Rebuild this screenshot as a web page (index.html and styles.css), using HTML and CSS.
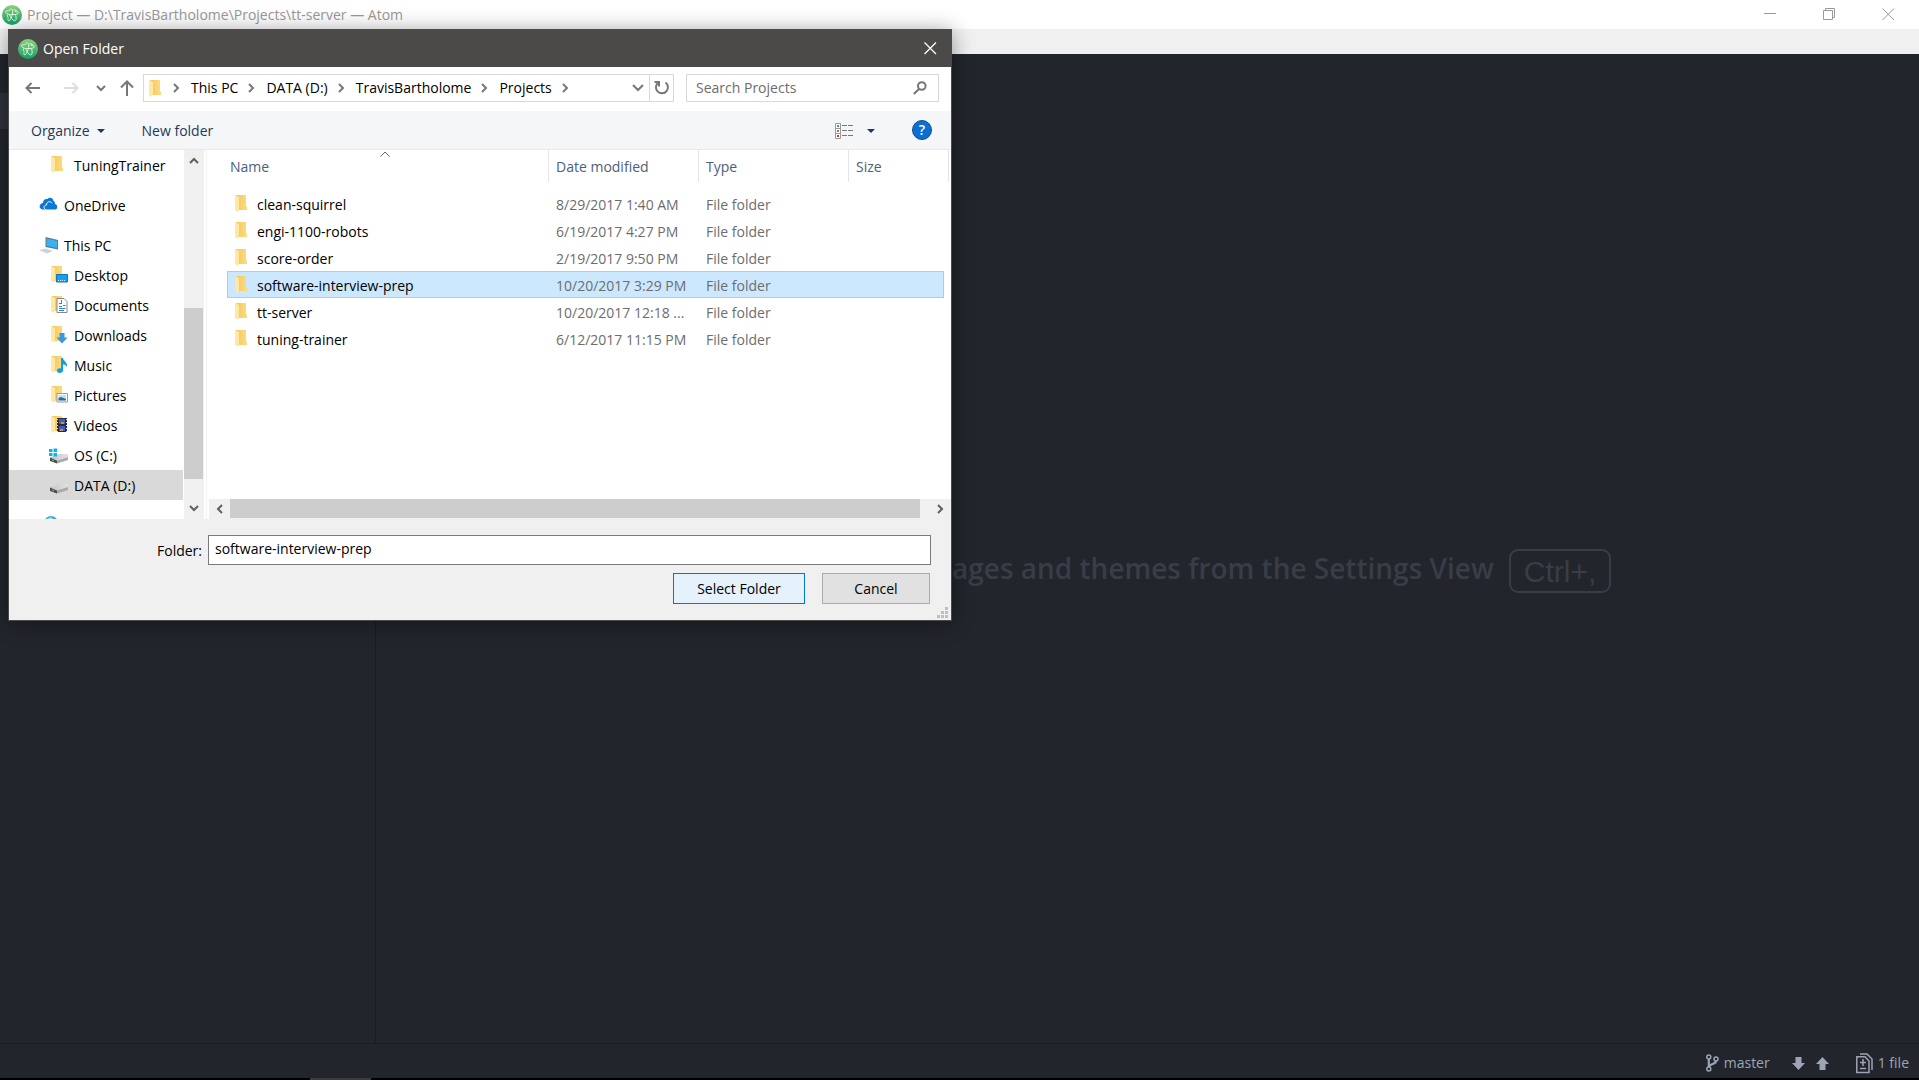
FILE: index.html
```html
<!DOCTYPE html>
<html lang="en">
<head>
<meta charset="utf-8">
<title>Project — Atom</title>
<link rel="stylesheet" href="styles.css">
</head>
<body>
<svg class="defs" aria-hidden="true">
  <defs>
    <linearGradient id="atom-green" x1="0" y1="0" x2="0" y2="1">
      <stop offset="0" stop-color="#8fd07c"/><stop offset="1" stop-color="#12a06c"/>
    </linearGradient>
    <linearGradient id="folder-gold" x1="0" y1="0" x2="1" y2="0">
      <stop offset="0" stop-color="#f0c75e"/><stop offset="1" stop-color="#fddc80"/>
    </linearGradient>
    <linearGradient id="drive-grey" x1="0" y1="0" x2="1" y2="0">
      <stop offset="0" stop-color="#c4c4c4"/><stop offset="1" stop-color="#e2e2e2"/>
    </linearGradient>
    <symbol id="atom" viewBox="0 0 20 20">
      <circle cx="10" cy="10" r="10" fill="url(#atom-green)"/>
      <g fill="none" stroke="#e2f6dc" stroke-width="1">
        <path d="M6.500 6C4.500 5.500 3.300 6 3.600 7.200C4.200 9 8 10 11 9.500C14 9.500 16.500 9 16.300 7.500C16.200 6.300 14.500 6 12.800 6.500"/>
        <path d="M7 6C7.500 3.800 9.500 3.400 10.500 4.800C11.500 7 9.500 13.500 7.500 15.500C6.300 16.200 5.500 15.500 6 13.500"/>
        <path d="M7.500 9.500C8.500 12 10 15 12.500 15.800C14.500 16 14.500 13 13.500 9.500M5.500 9.500C5.200 11 5.500 12 6.500 13"/>
        <path d="M11.500 4.500L14.500 5.500"/>
      </g>
    </symbol>
    <symbol id="folder" viewBox="0 0 12 17">
      <path d="M1 0H11V11L12 12V15H1Z" fill="url(#folder-gold)"/>
      <path d="M0 0L4 2V14L3 17L0 15Z" fill="#ffe8a2"/>
    </symbol>
    <symbol id="chev-right" viewBox="0 0 7 10"><path d="M1 1L5 5L1 9" fill="none" stroke="currentColor" stroke-width="2"/></symbol>
    <symbol id="chev-left" viewBox="0 0 7 10"><path d="M6 1L2 5L6 9" fill="none" stroke="currentColor" stroke-width="2"/></symbol>
    <symbol id="chev-down" viewBox="0 0 10 7"><path d="M1 1L5 5L9 1" fill="none" stroke="currentColor" stroke-width="2"/></symbol>
    <symbol id="chev-up" viewBox="0 0 10 7"><path d="M1 6L5 2L9 6" fill="none" stroke="currentColor" stroke-width="2"/></symbol>
    <symbol id="caret" viewBox="0 0 8 4"><path d="M0 0H8L4 4Z" fill="currentColor"/></symbol>
    <symbol id="drive" viewBox="0 0 20 16">
      <path d="M1 9.500L10 6H19V9L8 12.500Z" fill="url(#drive-grey)"/>
      <path d="M8 12.500L19 9V12L8 15.500Z" fill="#a9a9a9"/>
      <path d="M1 9.500L8 12.500V15.500L1 13Z" fill="#4a4d4c"/>
      <path d="M3 11.500L5 12.300V13.300L3 12.500Z" fill="#6fd06b"/>
    </symbol>
  </defs>
</svg>

<div class="app">
  <header class="titlebar">
    <svg class="atom-icon"><use href="#atom"/></svg>
    <h1 class="title">Project — D:\TravisBartholome\Projects\tt-server — Atom</h1>
    <div class="controls">
      <button class="control" aria-label="Minimize"><svg width="13" height="13"><path d="M0 5.500H12" stroke="#999"/></svg></button>
      <button class="control" aria-label="Restore"><svg width="13" height="13" fill="none" stroke="#999"><path d="M0.500 2.500H9.500V11.500H0.500ZM2.500 2V0.500H11.500V9.500H10"/></svg></button>
      <button class="control" aria-label="Close"><svg width="13" height="13"><path d="M0.500 0.500L12 12M12 0.500L0.500 12" stroke="#999"/></svg></button>
    </div>
  </header>
  <div class="menubar"></div>
  <div class="workspace">
    <aside class="tree"><div class="tree-row"></div></aside>
    <main class="editor">
      <p class="tip">ages and themes from the Settings View <kbd class="key">Ctrl+,</kbd></p>
    </main>
  </div>
  <footer class="status">
    <a class="status-item" href="#branch">
      <svg width="13" height="18" fill="none" stroke="currentColor" stroke-width="1.500"><circle cx="2.800" cy="3" r="2"/><circle cx="2.800" cy="15" r="2"/><circle cx="10" cy="5" r="2"/><path d="M2.800 5V13M10 7C10 11 3.500 9 3 13" stroke-width="2.200"/></svg>
      master</a>
    <span class="arrows">
      <svg width="13" height="13"><path d="M3.500 0H9.500V6H13L6.500 13L0 6H3.500Z" fill="currentColor"/></svg>
      <svg width="13" height="13"><path d="M3.500 13H9.500V7H13L6.500 0L0 7H3.500Z" fill="currentColor"/></svg>
    </span>
    <a class="status-item files" href="#files">
      <svg width="17" height="21" fill="none" stroke="currentColor" stroke-width="1.500"><path d="M0.800 3.800H9L13 8V19.500H0.800ZM4 1H11L16 6V17M7 6V13M4 9.500H10M4 15.500H10"/></svg>
      1 file</a>
  </footer>
  <div class="taskbar"><div class="task"></div></div>
</div>

<section class="dialog" role="dialog" aria-labelledby="dialog-title">
  <header class="dialog-head">
    <svg class="atom-icon"><use href="#atom"/></svg>
    <h2 class="title" id="dialog-title">Open Folder</h2>
    <button class="dialog-close" aria-label="Close dialog"><svg width="13" height="13"><path d="M0.500 0.500L12 12M12 0.500L0.500 12" stroke="#fff" stroke-width="1.300"/></svg></button>
  </header>

  <div class="navrow">
    <button class="nav-btn" aria-label="Back"><svg width="15" height="12" fill="none" stroke="#777" stroke-width="2"><path d="M15 6H1.500M6.500 1L1.500 6L6.500 11"/></svg></button>
    <button class="nav-btn" aria-label="Forward"><svg width="15" height="12" fill="none" stroke="#ddd" stroke-width="2"><path d="M0 6H13.500M8.500 1L13.500 6L8.500 11"/></svg></button>
    <button class="nav-btn small" aria-label="Recent locations"><svg class="chev-v"><use href="#chev-down"/></svg></button>
    <button class="nav-btn up" aria-label="Up"><svg width="14" height="16" fill="none" stroke="#777" stroke-width="2"><path d="M7 16V1.500M1 7.500L7 1.500L13 7.500"/></svg></button>
    <div class="address">
      <svg class="folder"><use href="#folder"/></svg>
      <svg class="crumb-sep"><use href="#chev-right"/></svg>
      <button class="crumb">This PC</button>
      <svg class="crumb-sep"><use href="#chev-right"/></svg>
      <button class="crumb">DATA (D:)</button>
      <svg class="crumb-sep"><use href="#chev-right"/></svg>
      <button class="crumb">TravisBartholome</button>
      <svg class="crumb-sep"><use href="#chev-right"/></svg>
      <button class="crumb">Projects</button>
      <svg class="crumb-sep"><use href="#chev-right"/></svg>
      <button class="history" aria-label="Previous locations"><svg width="12" height="8" fill="none" stroke="#777" stroke-width="2"><path d="M1 1L6 6L11 1"/></svg></button>
      <button class="refresh" aria-label="Refresh"><svg width="16" height="16" fill="none" stroke="#777" stroke-width="2"><path d="M4 2.800A6 6 0 1 0 11.500 2.500M0.500 2H5V6.500"/></svg></button>
    </div>
    <div class="search">
      <input class="search-input" type="text" placeholder="Search Projects" aria-label="Search Projects">
      <svg width="14" height="14" fill="none" stroke="#777" stroke-width="2"><circle cx="8.800" cy="5" r="3.800"/><path d="M6 8L0.800 13"/></svg>
    </div>
  </div>

  <div class="toolbar">
    <button class="tool">Organize <svg class="caret"><use href="#caret"/></svg></button>
    <button class="tool new">New folder</button>
    <button class="tool view" aria-label="Change your view">
      <svg width="18" height="16"><path d="M0.500 0.500H5.500V15.500H0.500ZM0.500 5.500H5.500M0.500 10.500H5.500" fill="#fff" stroke="#999"/><path d="M7 2.500H12M13 2.500H18M7 7.500H12M13 7.500H18M7 12.500H12M13 12.500H18" stroke="#777"/><path d="M2 2H4V4H2Z" fill="#3a8fd0"/><path d="M2 7H4V9H2Z" fill="#a08030"/><path d="M2 12H4V14H2Z" fill="#d03c20"/></svg>
      <svg class="caret"><use href="#caret"/></svg>
    </button>
    <button class="help" aria-label="Help">?</button>
  </div>

  <div class="panes">
    <nav class="places">
      <ul class="place-list">
        <li><a class="place child gap" href="#tt"><svg class="pico" viewBox="0 0 17 18"><use href="#folder" width="12" height="17"/></svg>TuningTrainer</a></li>
        <li><a class="place gap" href="#onedrive"><svg class="rico" viewBox="0 0 20 18"><path d="M4.500 13.500C1 13.500 0 11 1 9C1.500 7.800 3 7 4 7C4 4 6 2.500 8.500 3C10 1 14 1.500 14.500 5C16 5.500 16 7 16 8C19 8.500 19 13.500 16 13.500Z" fill="#0a78d6"/><path d="M6.500 13.500C4.500 12.500 4.500 9.500 7.500 9C7.500 5.500 11.500 4.500 13 7.200" fill="none" stroke="#fff"/></svg>OneDrive</a></li>
        <li><a class="place" href="#pc"><svg class="rico" viewBox="0 0 20 18"><path d="M6.500 1L19 4V13.500L6.500 11Z" fill="#5c7c8c"/><path d="M7.500 2.500L18 5V12L7.500 9.800Z" fill="#3bb0f5"/><path d="M0 14L7 12.500L14 15L8 17.500Z" fill="#cdd2d6"/></svg>This PC</a></li>
        <li><a class="place child" href="#desktop"><svg class="pico" viewBox="0 0 17 18"><use href="#folder" width="12" height="17"/><path d="M5.500 8.500H16.500V16H5.500Z" fill="#12a0f5" stroke="#1574b4"/><path d="M7 14.500H15" stroke="#d8f0ff" stroke-dasharray="1 1"/></svg>Desktop</a></li>
        <li><a class="place child" href="#documents"><svg class="pico" viewBox="0 0 17 18"><use href="#folder" width="12" height="17"/><path d="M6 2.500H13L16 5.500V16.500H6Z" fill="#fff" stroke="#888"/><path d="M8 7.500H11M12 9.500H14.500M8 10.500H11M8 12.500H14.500M8 14.500H13M10.500 4V8" stroke="#2b88cc"/></svg>Documents</a></li>
        <li><a class="place child" href="#downloads"><svg class="pico" viewBox="0 0 17 18"><use href="#folder" width="12" height="17"/><path d="M8.500 7H13.500V11.500H16.500L11 17.500L5.500 11.500H8.500Z" fill="#3d96e0"/></svg>Downloads</a></li>
        <li><a class="place child" href="#music"><svg class="pico" viewBox="0 0 17 18"><use href="#folder" width="12" height="17"/><path d="M10 2H12C12 5 17 6 16 11C15 9 13.500 8.500 12 8.500V14.500C12 17.500 6 18 6 14.800C6 12.500 8.500 12 10 12.500Z" fill="#0d9cf0"/></svg>Music</a></li>
        <li><a class="place child" href="#pictures"><svg class="pico" viewBox="0 0 17 18"><use href="#folder" width="12" height="17"/><path d="M6 7.500H16.500V16H6Z" fill="#fff" stroke="#999"/><path d="M7.500 9H15V14.500H7.500Z" fill="#bde0f7"/><path d="M7.500 12L10 11L15 13V14.500H7.500Z" fill="#2a6b9c"/></svg>Pictures</a></li>
        <li><a class="place child" href="#videos"><svg class="pico" viewBox="0 0 17 18"><use href="#folder" width="12" height="17"/><path d="M6 2H16V16H6Z" fill="#2c2c30"/><path d="M8 3H14V8H8ZM8 10H14V15H8Z" fill="#3b5ec0"/><path d="M10 6H13V8H10ZM9 13H12V15H9Z" fill="#d08a50"/><path d="M6.500 3V16M15.500 3V16" stroke="#ddd" stroke-dasharray="1 2"/></svg>Videos</a></li>
        <li><a class="place disk" href="#c"><svg class="rico" viewBox="0 0 20 18"><use href="#drive" y="2" width="20" height="16"/><path d="M0 3H3.500V6H0ZM4.500 2.500H8V6H4.500ZM0 7H3.500V10H0ZM4.500 7H8V10.500H4.500Z" fill="#00b7f1"/></svg>OS (C:)</a></li>
        <li><a class="place disk gap current" href="#d"><svg class="rico" viewBox="0 0 20 18"><use href="#drive" y="2" width="20" height="16"/></svg>DATA (D:)</a></li>
        <li><a class="place" href="#network" aria-label="Network"><svg class="rico" viewBox="0 0 20 18"><circle cx="12" cy="7" r="7" fill="#4ba3c4"/><path d="M8 3L12 1L14 3L11 6Z" fill="#a9dcea"/></svg></a></li>
      </ul>
      <div class="vscroll">
        <button class="vbtn" aria-label="Scroll up"><svg class="chev-v"><use href="#chev-up"/></svg></button>
        <div class="vthumb"></div>
        <button class="vbtn" aria-label="Scroll down"><svg class="chev-v"><use href="#chev-down"/></svg></button>
      </div>
    </nav>
    <div class="files-pane">
      <table class="file-table">
        <thead>
          <tr>
            <th class="c-name">Name<svg class="sort" width="10" height="6"><path d="M0.500 5.500L5 1L9.500 5.500" fill="none" stroke="#666"/></svg></th>
            <th class="c-date">Date modified</th><th class="c-type">Type</th><th class="c-size">Size</th><th class="c-end"></th>
          </tr>
        </thead>
        <tbody>
          <tr><td><svg class="folder"><use href="#folder"/></svg>clean-squirrel</td><td>8/29/2017 1:40 AM</td><td>File folder</td><td></td></tr>
          <tr><td><svg class="folder"><use href="#folder"/></svg>engi-1100-robots</td><td>6/19/2017 4:27 PM</td><td>File folder</td><td></td></tr>
          <tr><td><svg class="folder"><use href="#folder"/></svg>score-order</td><td>2/19/2017 9:50 PM</td><td>File folder</td><td></td></tr>
          <tr class="selected"><td><svg class="folder"><use href="#folder"/></svg>software-interview-prep</td><td>10/20/2017 3:29 PM</td><td>File folder</td><td></td></tr>
          <tr><td><svg class="folder"><use href="#folder"/></svg>tt-server</td><td>10/20/2017 12:18 ...</td><td>File folder</td><td></td></tr>
          <tr><td><svg class="folder"><use href="#folder"/></svg>tuning-trainer</td><td>6/12/2017 11:15 PM</td><td>File folder</td><td></td></tr>
        </tbody>
      </table>
      <div class="hscroll">
        <button class="hbtn" aria-label="Scroll left"><svg class="chev-h"><use href="#chev-left"/></svg></button>
        <div class="hthumb"></div>
        <button class="hbtn" aria-label="Scroll right"><svg class="chev-h"><use href="#chev-right"/></svg></button>
      </div>
    </div>
  </div>

  <form class="dialog-foot">
    <div class="field">
      <label class="field-label" for="folder-name">Folder:</label>
      <input class="field-input" id="folder-name" type="text" value="software-interview-prep">
    </div>
    <div class="actions">
      <button class="btn primary" type="button">Select Folder</button>
      <button class="btn" type="button">Cancel</button>
    </div>
    <svg class="grip" width="11" height="11"><path d="M8 0H11V3H8ZM4 4H7V7H4ZM8 4H11V7H8ZM0 8H3V11H0ZM4 8H7V11H4ZM8 8H11V11H8Z" fill="#bfbfbf"/></svg>
  </form>
</section>
</body>
</html>
```

FILE: styles.css
```css
* { box-sizing: border-box; }

body {
  margin: 0;
  font: 14px/20px "Open Sans", "Noto Sans", sans-serif;
  color: #000;
}

button, input {
  margin: 0;
  padding: 0;
  border: 0;
  background: none;
  font: inherit;
  color: inherit;
}

button {
  display: flex;
  align-items: center;
  justify-content: center;
}

a { color: inherit; text-decoration: none; }
svg { display: block; flex: none; }
.defs { position: absolute; width: 0; height: 0; }

.atom-icon { width: 20px; height: 20px; }
.folder { width: 12px; height: 17px; }
.chev-v { width: 10px; height: 7px; }
.chev-h { width: 7px; height: 10px; }
.caret { width: 8px; height: 4px; }
.title { margin: 0; font-size: 14px; font-weight: 400; }

/* Editor window */
.app {
  display: flex;
  flex-direction: column;
  height: 100vh;
  background: #22252c;
}

.titlebar {
  display: flex;
  align-items: center;
  gap: 5px;
  height: 29px;
  padding: 0 1px 0 2px;
  background: #fff;
  color: #999;
}

.controls { display: flex; margin-left: auto; }
.control { width: 59px; height: 29px; }
.menubar { height: 25px; background: #f0f0f0; }
.workspace { display: flex; flex: 1; }

.tree {
  width: 376px;
  padding-top: 39px;
  border-right: 1px solid #1a1c20;
}

.tree-row { height: 36px; background: #2e323c; }

.editor {
  display: flex;
  flex: 1;
  align-items: center;
  padding-left: 576px;
}

.tip {
  display: flex;
  align-items: flex-start;
  gap: 15px;
  margin: 0;
  padding-top: 44px;
  font-size: 28px;
  line-height: 38px;
  font-weight: 600;
  white-space: nowrap;
  color: #383d47;
}

.key {
  height: 44px;
  padding: 0 13px;
  border: 2px solid #383d47;
  border-radius: 9px;
  font: 30px/42px "Liberation Sans", sans-serif;
}

.status {
  display: flex;
  align-items: center;
  justify-content: flex-end;
  height: 35px;
  padding: 4px 10px 0 0;
  border-top: 1px solid #1a1c20;
  color: #9da5b4;
}

.status-item { display: flex; align-items: center; gap: 5px; }
.arrows { display: flex; gap: 11px; margin: 0 27px 0 22px; }
.taskbar { height: 2px; padding-left: 310px; background: #000; }
.task { width: 61px; height: 2px; background: #3c3c3c; }

/* Folder picker, floating over the editor */
.dialog {
  position: absolute;
  left: 8px;
  top: 29px;
  width: 944px;
  border: 1px solid #4c4a48;
  background: #fff;
  box-shadow: 0 2px 20px rgba(0, 0, 0, 0.4);
}

.dialog-head {
  display: flex;
  align-items: center;
  gap: 5px;
  height: 37px;
  padding-left: 9px;
  background: #4c4a48;
  color: #fff;
}

.dialog-close { width: 42px; height: 37px; margin-left: auto; }

.navrow {
  display: flex;
  align-items: center;
  height: 44px;
  padding: 0 12px 2px 4px;
  color: #777;
}

.nav-btn { width: 39px; height: 28px; }
.nav-btn.small { width: 20px; }
.nav-btn.up { width: 32px; }

.address, .search {
  display: flex;
  align-items: center;
  height: 28px;
  border: 1px solid #d9d9d9;
}

.address { flex: 1; padding-left: 5px; }
.crumb-sep { width: 7px; height: 10px; margin: 0 11px 0 10px; }
.folder + .crumb-sep { margin-left: 12px; }
.crumb { height: 26px; color: #000; }
.history { width: 22px; height: 26px; margin-left: auto; }
.refresh { width: 24px; height: 26px; border-left: 1px solid #d9d9d9; }
.search { width: 253px; margin-left: 12px; padding: 0 11px 0 9px; }
.search-input { flex: 1; min-width: 0; outline: 0; }
.search-input::placeholder { color: #6d6d6d; opacity: 1; }

.toolbar {
  display: flex;
  align-items: center;
  height: 39px;
  padding: 0 19px 0 22px;
  border-bottom: 1px solid #e8e9ea;
  background: #f5f6f7;
  color: #1e395b;
}

.tool { gap: 7px; height: 30px; padding-top: 1px; }
.tool.new { margin-left: 37px; }
.tool.view { gap: 14px; margin-left: auto; }

.help {
  width: 20px;
  height: 20px;
  margin-left: 37px;
  border: 1px solid #0a4f94;
  border-radius: 50%;
  background: #0a6fd0;
  color: #fff;
  font-weight: 600;
}

.panes { display: flex; height: 369px; }

.places {
  display: flex;
  flex: none;
  width: 198px;
  padding-right: 2px;
  border-right: 1px solid #f2f2f2;
}

.place-list {
  flex: 1;
  margin: 0;
  padding: 0;
  overflow: hidden;
  list-style: none;
}

.place {
  display: flex;
  align-items: center;
  gap: 5px;
  height: 30px;
  margin-right: 1px;
  padding: 2px 0 0 30px;
}

.place.gap { margin-bottom: 10px; }
.place.child { gap: 6px; padding-left: 42px; }
.place.disk { padding-left: 40px; }
.place.current { background: #d9d9d9; }
.pico, .rico { height: 18px; margin-bottom: 2px; }
.pico { width: 17px; }
.rico { width: 20px; }

.vscroll {
  display: flex;
  flex-direction: column;
  justify-content: space-between;
  width: 20px;
  background: #f0f0f0;
  color: #606060;
}

.vbtn { width: 20px; height: 21px; }
.vthumb { height: 171px; margin: auto 1px 19px 0; background: #cdcdcd; }

.files-pane {
  display: flex;
  flex: 1;
  flex-direction: column;
  justify-content: space-between;
  min-width: 0;
}

.file-table {
  width: 722px;
  margin-left: 20px;
  border-collapse: separate;
  border-spacing: 0;
  table-layout: fixed;
}

.file-table th {
  height: 32px;
  padding: 2px 0 0 7px;
  border-right: 1px solid #e5e5e5;
  text-align: left;
  font-weight: 400;
  color: #4c607a;
}

.file-table .c-name { position: relative; width: 322px; padding-left: 3px; }
.c-date, .c-type { width: 150px; }
.file-table .c-size { width: 95px; border-right: 0; }
.file-table .c-end { width: 5px; padding: 0; }
.sort { position: absolute; left: 153px; top: 1px; }
.file-table tbody::before { content: ""; display: block; height: 8px; }

.file-table td {
  height: 27px;
  padding: 2px 0 0 7px;
  border: 0 solid #99d1ff;
  color: #6d6d6d;
}

.file-table td:first-child { padding-left: 8px; color: #000; }
.file-table td .folder { float: left; margin-right: 10px; }
.selected td { background: #cce8ff; }
.file-table .selected td { border-width: 1px 0; }
.file-table .selected td:first-child { padding-left: 7px; border-left-width: 1px; }
.file-table .selected td:last-child { border-right-width: 1px; }

.hscroll {
  display: flex;
  height: 20px;
  margin-left: 2px;
  background: #f0f0f0;
  color: #606060;
}

.hbtn { width: 21px; height: 19px; }
.hthumb { flex: 1; height: 19px; margin-right: 10px; background: #cdcdcd; }

.dialog-foot {
  position: relative;
  padding: 16px 20px 16px 0;
  background: #f0f0f0;
}

.field { display: flex; align-items: center; }
.field-label { width: 199px; padding: 2px 6px 0 0; text-align: right; }

.field-input {
  flex: 1;
  height: 30px;
  padding: 0 6px 3px;
  border: 1px solid #7a7a7a;
  background: #fff;
}

.actions {
  display: flex;
  justify-content: flex-end;
  gap: 17px;
  padding: 8px 1px 0 0;
}

.btn {
  width: 108px;
  height: 31px;
  border: 1px solid #adadad;
  background: #e1e1e1;
}

.btn.primary { width: 132px; border-color: #0078d7; background: #e5f1fb; }
.grip { position: absolute; right: 3px; bottom: 2px; }
```
